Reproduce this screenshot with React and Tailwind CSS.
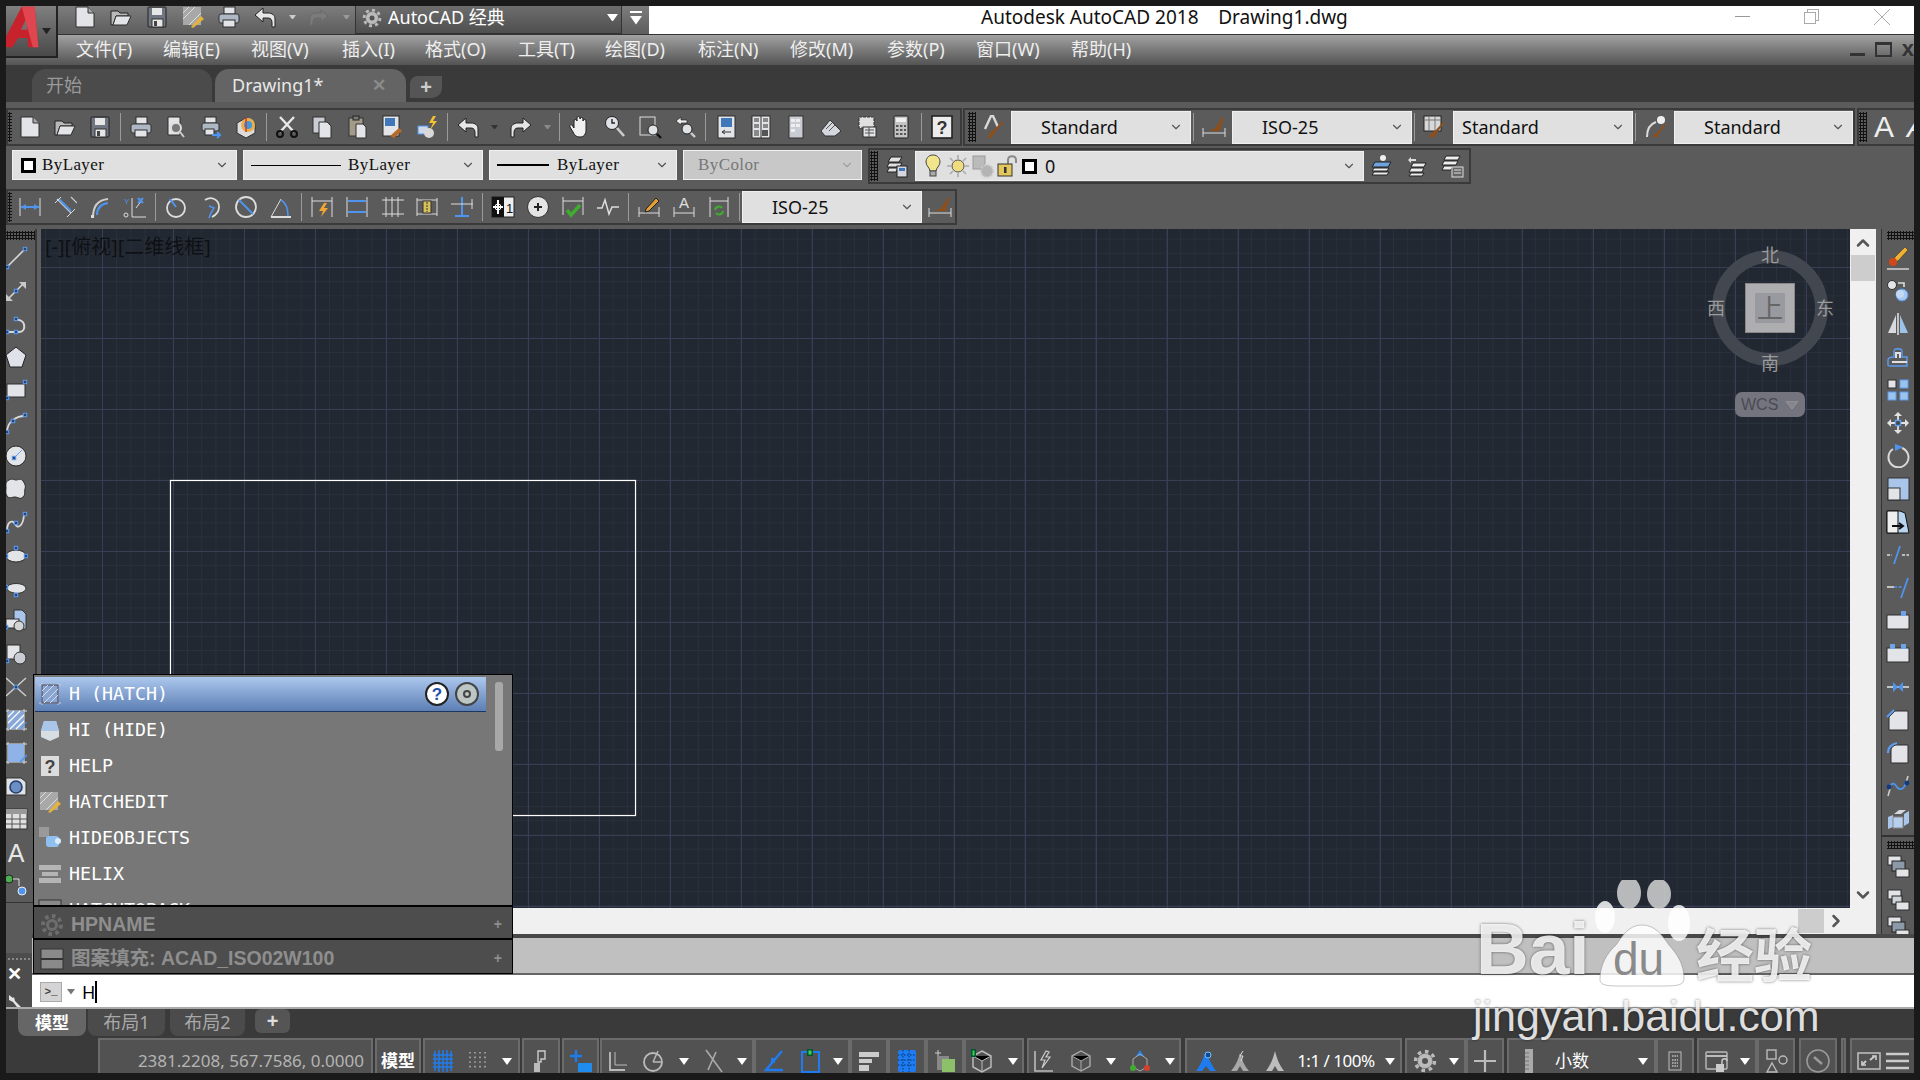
import { ChevronDown, ChevronUp, ChevronRight } from 'lucide-react';

const CJK = "font-['Noto_Sans','Noto_Sans_CJK_SC',sans-serif]";

const Hd = ({ x, y }) => <rect x={x - 1.7} y={y - 1.7} width="3.4" height="3.4" fill="#26447a" stroke="#5d9cf0" strokeWidth="1" />;
const P = { fill: '#e2e4e8', stroke: '#2e2e2e', strokeWidth: 1 };
const G = { fill: '#c9ccd2', stroke: '#333', strokeWidth: 1 };

// every icon of the picture, on a 24 x 24 grid
const icons = {
  new: <><path d="M3 2h12l6 6v14H3z" {...P} /><path d="M15 2v6h6" fill="#aaa" stroke="#333" /></>,
  open: <><path d="M2 6h7l2 2h8v3H7l-3 9H2z" fill="#b9b9b9" stroke="#222" /><path d="M7 11h15l-4 9H4z" {...P} /></>,
  save: <><rect x="3" y="2" width="18" height="20" rx="1" fill="#6f7681" stroke="#222" /><rect x="7" y="3" width="10" height="7" fill="#e6e6e6" /><rect x="7" y="14" width="11" height="8" fill="#e6e6e6" stroke="#333" /><rect x="9" y="16" width="3" height="5" fill="#444" /></>,
  print: <><rect x="7" y="2" width="11" height="7" {...P} /><rect x="2" y="9" width="20" height="9" rx="2" fill="#aeb8c4" stroke="#333" /><rect x="6" y="15" width="12" height="7" {...P} /></>,
  preview: <><path d="M4 2h12v18H4z" {...P} /><circle cx="12" cy="13" r="5" fill="#777" stroke="#ddd" strokeWidth="2" /><path d="M16 17l4 5" stroke="#ccc" strokeWidth="2" /></>,
  publish: <><rect x="6" y="2" width="11" height="6" {...P} /><rect x="3" y="8" width="17" height="8" rx="2" fill="#aeb8c4" stroke="#333" /><rect x="6" y="14" width="9" height="6" {...P} /><path d="M13 20h8m-3-3l3 3-3 3" fill="none" stroke="#4f94ee" strokeWidth="2" /></>,
  plot3d: <><path d="M3 8l9-5 9 5v10l-9 5-9-5z" fill="#dcdcdc" stroke="#333" /><circle cx="14" cy="10" r="7" fill="#e8b04a" /><circle cx="14" cy="10" r="4" fill="#3d9adf" /><path d="M12 3v14" stroke="#d33" strokeWidth="1.5" /></>,
  cut: <><path d="M5 2l14 15M19 2L5 17" stroke="#e8e8e8" strokeWidth="2.4" /><circle cx="5" cy="19" r="3" fill="none" stroke="#111" strokeWidth="2" /><circle cx="19" cy="19" r="3" fill="none" stroke="#111" strokeWidth="2" /></>,
  copy: <><rect x="3" y="2" width="12" height="16" {...G} /><path d="M9 7h8l4 4v12H9z" {...P} /></>,
  paste: <><rect x="4" y="3" width="14" height="18" fill="#a49a8a" stroke="#333" /><rect x="8" y="1" width="6" height="4" fill="#777" stroke="#222" /><path d="M11 9h7l3 3v11H11z" {...P} /></>,
  match: <><rect x="3" y="1" width="16" height="20" {...P} /><rect x="5" y="3" width="10" height="8" fill="#3f77b8" /><path d="M10 21l9-8 3 3-8 7z" fill="#b56a28" /></>,
  blockx: <><rect x="3" y="11" width="10" height="8" fill="#cfd8e6" stroke="#4f94ee" /><circle cx="14" cy="18" r="5" fill="#d8d8d8" /><path d="M18 1l-4 7h4l-3 7 7-9h-4l3-5z" fill="#f2c230" /></>,
  undo: <><path d="M10 3L2 10l8 7v-4h5c3 0 4 2 4 5v4h3v-8c0-4-3-6-7-6h-5z" fill="#e6e6e6" stroke="#222" /></>,
  redo: <><path d="M14 3l8 7-8 7v-4H9c-3 0-4 2-4 5v4H2v-8c0-4 3-6 7-6h5z" fill="#e6e6e6" stroke="#222" /></>,
  redoDim: <><path d="M14 5l7 6-7 6v-4H9c-2 0-3 2-3 4v3H3v-7c0-3 3-5 6-5h5z" fill="#7b7b7b" stroke="#6a6a6a" /></>,
  pan: <><path d="M6 13V6a1.4 1.4 0 0 1 3 0V3a1.4 1.4 0 0 1 3 0v1a1.4 1.4 0 0 1 3 0v2a1.4 1.4 0 0 1 3 0v9c0 4-2 7-6 7-3 0-5-1-7-5l-3-5c-1-2 1-3 2-2z" fill="#f0f0f0" stroke="#222" /></>,
  zoomrt: <><circle cx="9" cy="8" r="6.5" fill="#dfe3e8" stroke="#222" /><path d="M9 4v4h3" fill="none" stroke="#222" strokeWidth="1.4" /><path d="M14 13l7 8" stroke="#ccc" strokeWidth="2.6" /></>,
  zoomwin: <><rect x="2" y="2" width="15" height="18" fill="none" stroke="#ddd" /><circle cx="15" cy="15" r="5" fill="#dfe3e8" stroke="#222" /><path d="M19 19l4 4" stroke="#111" strokeWidth="2.4" /></>,
  zoomprev: <><path d="M8 2L3 6l5 4V8h6V5H8z" fill="#eee" stroke="#222" strokeWidth=".7" /><circle cx="14" cy="14" r="5" fill="#dfe3e8" stroke="#222" /><path d="M18 18l4 4" stroke="#ccc" strokeWidth="2.4" /></>,
  props: <><rect x="4" y="1" width="17" height="22" {...P} /><rect x="7" y="3" width="11" height="9" fill="#3f77b8" /><path d="M8 17h9M8 17l3-2m-3 2l3 2" stroke="#333" fill="none" /></>,
  dc: <><rect x="3" y="1" width="18" height="22" {...P} /><path d="M12 1v22" stroke="#333" /><g fill="#888"><rect x="5" y="3" width="5" height="4" /><rect x="14" y="3" width="5" height="4" /><rect x="5" y="9" width="5" height="4" /><rect x="14" y="9" width="5" height="4" /><rect x="5" y="15" width="5" height="6" /></g><rect x="13" y="15" width="6" height="6" fill="#555" /></>,
  palette: <><rect x="5" y="1" width="14" height="22" {...G} /><g fill="#eee"><rect x="7" y="4" width="4" height="3" /><rect x="12" y="4" width="4" height="3" /><rect x="7" y="9" width="4" height="3" /><rect x="12" y="9" width="4" height="3" /><rect x="7" y="14" width="4" height="3" /></g></>,
  sheet: <><path d="M2 16L11 5l11 11-6 5H6z" fill="#d4d8de" stroke="#333" /><path d="M7 14l6-6M10 16l6-6" stroke="#555" /></>,
  markup: <><path d="M5 2h15v11H5z" fill="#e0e0e0" stroke="#333" strokeDasharray="3 1" /><rect x="9" y="12" width="13" height="10" {...P} /><path d="M11 15h9M11 18h9M15 12v10" stroke="#555" /></>,
  calc: <><rect x="5" y="1" width="14" height="22" rx="1" fill="#c4c4c4" stroke="#222" /><rect x="7" y="3" width="10" height="4" fill="#efefef" /><g fill="#555"><rect x="7" y="10" width="2.5" height="2" /><rect x="11" y="10" width="2.5" height="2" /><rect x="15" y="10" width="2" height="2" /><rect x="7" y="14" width="2.5" height="2" /><rect x="11" y="14" width="2.5" height="2" /><rect x="15" y="14" width="2" height="2" /><rect x="7" y="18" width="2.5" height="2" /><rect x="11" y="18" width="2.5" height="2" /><rect x="15" y="18" width="2" height="2" /></g></>,
  help: <><rect x="2" y="1" width="20" height="22" fill="#ececec" stroke="#222" strokeWidth="1.6" /><text x="12" y="19" textAnchor="middle" fontSize="18" fontWeight="700" fill="#333" fontFamily="Liberation Sans">?</text></>,
  brushA: <><path d="M3 14L9 1h2l5 11" fill="none" stroke="#d8d8d8" strokeWidth="2.4" /><path d="M21 8l-7 8-5 7H5c3-2 2-7 7-8l8-9z" fill="#8d4f1c" /></>,
  brushDim: <><path d="M1 13v9M23 13v9M1 18h22" stroke="#ddd" /><path d="M21 2l-6 8c-2 4-4 4-8 6h11c1-3 0-5 4-12z" fill="#8d4f1c" /></>,
  brushTab: <><rect x="1" y="1" width="17" height="15" fill="#d8d8d8" stroke="#222" /><path d="M1 5h17M6 1v15M12 1v15" stroke="#777" /><path d="M22 7l-6 8-5 7H5c3-2 3-5 7-6l8-9z" fill="#8d4f1c" /></>,
  brushLead: <><path d="M3 22c0-8 3-13 9-15" fill="none" stroke="#ddd" strokeWidth="2" /><circle cx="17" cy="5" r="4" fill="#eee" /><path d="M22 9l-5 7-4 6H8c2-2 3-4 6-5l6-8z" fill="#8d4f1c" /></>,
  layers: <><path d="M6 3h11l-3 5H3z" fill="#e2e2e2" stroke="#222" /><path d="M4 9h13l-2 4H2z" fill="#e2e2e2" stroke="#222" /><path d="M4 14h9l-2 4H2z" fill="#e2e2e2" stroke="#222" /><rect x="12" y="12" width="10" height="11" fill="#d4d8de" stroke="#222" /><rect x="14" y="14" width="6" height="3" fill="#3f77b8" /></>,
  layerCur: <><circle cx="13" cy="4" r="3" fill="#eee" /><path d="M5 8h16l-3 5H2z" fill="#6fa3dd" stroke="#222" /><path d="M4 14h15l-2 3H2zM4 18h15l-2 3H2z" fill="#eee" stroke="#222" /></>,
  layerPrev: <><path d="M3 6l3-3v2h5v2H6v2z" fill="#ddd" /><path d="M8 9h13l-2 4H6zM6 14h13l-2 4H4zM6 19h13l-2 3H4z" fill="#eee" stroke="#222" /></>,
  layerSt: <><path d="M6 2h14l-2 4H4zM4 7h14l-2 4H2zM4 12h9l-2 4H2z" fill="#eee" stroke="#222" /><rect x="12" y="13" width="11" height="10" fill="#666" stroke="#ddd" /><path d="M14 16h7M14 19h7" stroke="#ddd" /></>,
  bulb: <><path d="M12 1c5 0 7 4 7 7 0 4-4 6-4 9H9c0-3-4-5-4-9 0-3 2-7 7-7z" fill="#f2e48a" stroke="#444" /><rect x="9" y="17" width="6" height="5" fill="#aaa" stroke="#444" /></>,
  sun: <><circle cx="12" cy="12" r="6" fill="#f0dc80" stroke="#555" /><path d="M12 1v4M12 19v4M1 12h4M19 12h4M4 4l3 3M17 17l3 3M20 4l-3 3M7 17l-3 3" stroke="#aaa" strokeWidth="1.6" /></>,
  vp: <><rect x="2" y="2" width="12" height="13" fill="#bbb" stroke="#999" /><circle cx="16" cy="17" r="6" fill="#b4b4b4" stroke="#c8c8c8" strokeDasharray="2 1.5" strokeWidth="2" /></>,
  lock: <><path d="M12 10V6c0-5 8-5 8 0v3" fill="none" stroke="#8a8a8a" strokeWidth="2" /><rect x="2" y="10" width="14" height="12" fill="#e3c75c" stroke="#333" /><rect x="8" y="13" width="2.5" height="6" fill="#333" /></>,
  dim1: <><path d="M2 3v18M22 3v18" stroke="#ddd" /><path d="M3 12h18" stroke="#4f94ee" strokeWidth="2" /><path d="M3 12l5-3v6zM21 12l-5-3v6z" fill="#4f94ee" /></>,
  dim2: <><path d="M4 4l14 14M18 2l6 6" stroke="#ccc" strokeWidth="1.2" /><path d="M6 4l12 12" stroke="#4f94ee" strokeWidth="2" /><path d="M2 8l6-6M14 22l8-8" stroke="#ddd" /></>,
  dim3: <><path d="M5 22c0-11 5-17 15-18" fill="none" stroke="#ccc" strokeWidth="2" /><path d="M9 20c0-7 4-11 11-12" fill="none" stroke="#4f94ee" strokeWidth="2" /><rect x="3" y="20" width="3" height="3" fill="#ddd" /></>,
  dim4: <><text x="1" y="9" fontSize="8" fill="#4f94ee" fontFamily="Liberation Sans">Y</text><path d="M9 3v19M9 22h14M13 13l6-8" stroke="#ddd" fill="none" /><path d="M15 3l5 5m0-5l-5 5" stroke="#4f94ee" strokeWidth="2" /><circle cx="3" cy="20" r="2" fill="none" stroke="#ddd" /></>,
  dimR: <><circle cx="12" cy="13" r="9" fill="none" stroke="#ddd" strokeWidth="1.8" /><path d="M6 4l6 8" stroke="#4f94ee" strokeWidth="2" /></>,
  dimJ: <><path d="M6 5c6-4 14-1 14 7 0 5-3 8-7 10" fill="none" stroke="#ddd" strokeWidth="1.8" /><path d="M10 11l5 2-3 5-2 5" fill="none" stroke="#4f94ee" strokeWidth="1.6" /></>,
  dimD: <><circle cx="12" cy="12" r="10" fill="none" stroke="#ddd" strokeWidth="1.8" /><path d="M5 5l14 14" stroke="#4f94ee" strokeWidth="2" /></>,
  dimA: <><path d="M2 22h20" stroke="#ddd" strokeWidth="2" /><path d="M2 22L12 4" stroke="#ddd" /><path d="M12 5c5 3 7 9 7 16" fill="none" stroke="#4f94ee" strokeWidth="1.6" /></>,
  dimQ: <><path d="M2 2v20M22 2v20M2 6h20" stroke="#ddd" /><path d="M14 8l-5 8h4l-2 6 7-9h-4l3-5z" fill="#f2a530" /></>,
  dimB: <><path d="M2 2v20M22 2v20" stroke="#ddd" /><path d="M3 6h18M3 17h18" stroke="#4f94ee" strokeWidth="2" /></>,
  dimC: <><path d="M2 5h22M2 19h22M6 2v20M12 2v20M18 2v20" stroke="#ddd" /></>,
  dimS: <><path d="M2 3v18M22 3v18M2 5h20M2 19h20" stroke="#ddd" /><rect x="8" y="6" width="8" height="12" fill="#d8c05a" stroke="#333" /><path d="M12 7v10" stroke="#333" strokeDasharray="2 1" /></>,
  dimT: <><path d="M12 2v20M5 21h14" stroke="#4f94ee" strokeWidth="2" /><path d="M1 9h22M22 4v10" stroke="#ddd" /></>,
  tol: <><rect x="1" y="2" width="22" height="20" fill="#eee" stroke="#222" /><rect x="1" y="2" width="12" height="20" fill="#111" /><path d="M7 5v14M2 12h10" stroke="#fff" strokeWidth="2" /><circle cx="7" cy="12" r="3" fill="none" stroke="#fff" /><text x="15" y="18" fontSize="13" fill="#111" fontFamily="Liberation Sans">1</text></>,
  cen: <><circle cx="12" cy="12" r="10.5" fill="#e4e4e4" stroke="#333" /><path d="M12 8v8M8 12h8" stroke="#222" strokeWidth="2" /></>,
  insp: <><path d="M2 2v18M22 2v18M2 6h20" stroke="#ddd" /><path d="M6 15l4 5 9-10" fill="none" stroke="#3fae2f" strokeWidth="3.4" /></>,
  jog: <><path d="M1 13h5l3-8 4 14 3-7h7" fill="none" stroke="#ddd" strokeWidth="1.5" /></>,
  dimPen: <><path d="M2 12v10M22 12v10M2 18h20" stroke="#ddd" /><path d="M9 14L19 3l3 3-10 10-4 1z" fill="#e0a032" stroke="#222" /></>,
  dimTx: <><text x="12" y="13" textAnchor="middle" fontSize="15" fill="#e0e0e0" fontFamily="Liberation Sans">A</text><path d="M2 12v10M22 12v10M2 18h20" stroke="#ddd" /></>,
  dimUp: <><path d="M3 2v20M21 2v20M3 6h18" stroke="#ddd" /><path d="M8 15a4 4 0 0 1 7-2m1 3a4 4 0 0 1-7 2" fill="none" stroke="#3fae2f" strokeWidth="2" /></>,
  line: <><path d="M4 20L20 4" stroke="#d8d8d8" strokeWidth="1.6" /><Hd x={3} y={21} /><Hd x={21} y={3} /></>,
  xline: <><path d="M5 19L19 5" stroke="#d8d8d8" strokeWidth="1.6" /><path d="M15 3h7v7zM2 15v7h7z" fill="#c9c9c9" /><Hd x={12} y={12} /></>,
  pline: <><path d="M3 20h12c7 0 7-11 0-12h-4" fill="none" stroke="#d8d8d8" strokeWidth="2" /><Hd x={3} y={20} /><Hd x={12} y={20} /><Hd x={12} y={7} /></>,
  polygon: <path d="M12 2l10 8-4 12H6L2 10z" fill="#dfe2e8" stroke="#222" />,
  rect: <><rect x="3" y="6" width="18" height="13" {...P} /><Hd x={3} y={20} /><Hd x={21} y={4} /></>,
  arc: <><path d="M3 21c0-9 8-16 18-16" fill="none" stroke="#d8d8d8" strokeWidth="1.8" /><Hd x={3} y={21} /><Hd x={9} y={10} /><Hd x={21} y={4} /></>,
  circle: <><circle cx="12" cy="12" r="10" {...P} /><path d="M11 13l7-7" stroke="#5d9cf0" /><Hd x={10} y={14} /></>,
  cloud: <path d="M5 3c3-2 5 0 7 0s5-2 7 1 3 5 2 8 1 5-2 8-5 0-8 0-6 2-8-1-1-5-1-8-1-6 3-8z" {...P} />,
  spline: <><path d="M3 21c0-9 5-12 8-7 2 5 8 3 9-9" fill="none" stroke="#d8d8d8" strokeWidth="1.8" /><Hd x={3} y={21} /><Hd x={12} y={13} /><Hd x={21} y={4} /></>,
  ellipse: <><ellipse cx="12" cy="13" rx="10" ry="6" {...P} /><Hd x={2} y={13} /><Hd x={12} y={5} /><Hd x={22} y={13} /></>,
  earc: <><path d="M3 12c0-6 18-6 19 0 0 5-9 6-12 5s-6-1-7-5z" {...P} /><Hd x={2} y={11} /><Hd x={12} y={19} /></>,
  insert: <><path d="M10 1h8l4 4v15H10z" fill="#a9c6ea" stroke="#333" /><rect x="2" y="10" width="13" height="9" {...P} /><circle cx="15" cy="17" r="5" fill="#d4d4d4" stroke="#333" /><Hd x={2} y={18} /></>,
  block: <><rect x="3" y="3" width="13" height="14" {...P} /><circle cx="16" cy="16" r="6" fill="#c9ccd2" stroke="#333" /><Hd x={3} y={19} /></>,
  xpoint: <><path d="M2 3l20 18M22 3L2 21" stroke="#cfcfcf" strokeWidth="1.4" /><Hd x={12} y={12} /></>,
  hatch: <><path d="M1 3h22M1 21h22M4 1v22M20 1v22" stroke="#ddd" /><rect x="4" y="3" width="16" height="18" fill="#88a9d8" /><path d="M4 9l6-6M4 15L16 3M6 21L20 7M12 21l8-8" stroke="#fff" strokeWidth="1.2" /><path d="M16 21l7-7" stroke="#4f94ee" /></>,
  hatch2: <><path d="M1 3h22M1 21h22M4 1v22M20 1v22" stroke="#ddd" /><rect x="4" y="3" width="16" height="18" fill="#8fb3e6" /><path d="M16 21l7-7" stroke="#4f94ee" strokeWidth="1.4" /></>,
  region: <><path d="M2 4h15l5 4v13H2z" fill="#dfe2e8" stroke="#333" /><circle cx="12" cy="13" r="6" fill="#6b8fc4" stroke="#24406d" strokeWidth="1.6" /></>,
  table: <><rect x="1" y="2" width="22" height="20" fill="#e0e0e0" stroke="#333" /><rect x="1" y="2" width="22" height="5" fill="#999" /><path d="M8 7v15M16 7v15M1 12h22M1 17h22" stroke="#555" /></>,
  textA: <text x="12" y="22" textAnchor="middle" fontSize="25" fill="#e8e8e8" fontFamily="Liberation Sans">A</text>,
  addsel: <><circle cx="5" cy="6" r="4" fill="#4caf50" stroke="#222" /><circle cx="18" cy="18" r="4" fill="#4f94ee" stroke="#eee" /><path d="M9 6h6v7" fill="none" stroke="#ddd" /></>,
  erase: <><path d="M22 4l-3-3L9 11l-2 5 5-1z" fill="#f0b030" stroke="#333" strokeWidth=".6" /><circle cx="7" cy="16" r="4" fill="#d0481a" /><path d="M1 23h22" stroke="#ccc" strokeWidth="1.6" /></>,
  rcopy: <><circle cx="6" cy="6" r="4.5" {...P} /><circle cx="16" cy="16" r="6" fill="#a9c6ea" stroke="#4f94ee" /><circle cx="14" cy="15" r="4" fill="#c3d9f2" /><path d="M12 4h6v4" fill="none" stroke="#ddd" strokeWidth="1.6" /></>,
  mirror: <><path d="M10 3v18H2z" fill="#d8dadf" /><path d="M14 3v18h8z" fill="#9cc3ea" /><path d="M12 1v22" stroke="#eee" strokeWidth="1.4" /></>,
  offset: <><path d="M2 20v-5c0-2 3-3 6-3V6c0-3 8-3 8 0v6h5v9H5c-2 0-3 0-3-1z" fill="none" stroke="#5d9cf0" strokeWidth="1.4" /><path d="M6 17h15M10 13V8h4v5" fill="none" stroke="#e0e0e0" strokeWidth="2" /></>,
  array: <><rect x="2" y="2" width="8" height="8" {...P} /><rect x="14" y="2" width="8" height="8" fill="#9cc3ea" stroke="#5d9cf0" /><rect x="2" y="14" width="8" height="8" fill="#9cc3ea" stroke="#5d9cf0" /><rect x="14" y="14" width="8" height="8" fill="#9cc3ea" stroke="#5d9cf0" /></>,
  move: <><path d="M12 1l4 4h-8zM12 23l-4-4h8zM1 12l4-4v8zM23 12l-4 4V8z" fill="#e2e2e2" /><path d="M12 4v16M4 12h16" stroke="#e2e2e2" strokeWidth="1.8" /><rect x="9.5" y="9.5" width="5" height="5" fill="#444" stroke="#5d9cf0" strokeWidth="1.4" /></>,
  rotate: <><path d="M16 4a10 10 0 1 1-9 1" fill="none" stroke="#d8d8d8" strokeWidth="2" /><path d="M9 0l8 3-8 4z" fill="#4f94ee" /></>,
  scale: <><rect x="2" y="1" width="21" height="22" fill="#a9c6ea" stroke="#333" /><rect x="2" y="11" width="12" height="12" {...P} /></>,
  stretch: <><path d="M1 1h13l5 2 4 20H1z" fill="#b9d6f0" stroke="#111" /><path d="M1 1h11v22H1z" fill="#efefef" stroke="#111" /><path d="M6 16h10m-3-3l4 3-4 3" stroke="#111" strokeWidth="2" fill="none" /></>,
  trim: <><path d="M1 12h5M16 12h7" stroke="#ddd" strokeWidth="1.6" strokeDasharray="3 1.5" /><path d="M14 3L8 21" stroke="#4f94ee" strokeWidth="1.8" /></>,
  extend: <><path d="M1 11h7" stroke="#ddd" strokeWidth="1.6" /><path d="M8 11h8" stroke="#4f94ee" strokeWidth="1.6" strokeDasharray="3 1.5" /><path d="M22 2l-7 20" stroke="#4f94ee" strokeWidth="1.8" /></>,
  brk1: <><rect x="1" y="6" width="22" height="14" {...P} /><rect x="15" y="2" width="5" height="5" fill="#6fa3e8" /></>,
  brk2: <><rect x="1" y="6" width="22" height="14" {...P} /><rect x="4" y="2" width="5" height="5" fill="#6fa3e8" /><rect x="15" y="2" width="5" height="5" fill="#6fa3e8" /></>,
  join: <><path d="M1 12h22" stroke="#ddd" strokeWidth="1.6" /><path d="M7 7l5 5-5 5zM17 7l-5 5 5 5z" fill="#4f94ee" /></>,
  chamfer: <><path d="M9 3h13v19H3V9z" {...P} /><path d="M1 9l7-7" stroke="#5d9cf0" strokeWidth="2.2" /></>,
  fillet: <><path d="M11 4h11v18H5V10c0-4 3-6 6-6z" {...P} /><path d="M2 12c0-6 4-9 9-10" fill="none" stroke="#5d9cf0" strokeWidth="2.2" /></>,
  blend: <><path d="M2 22l2-7M20 9l2-7" stroke="#ccc" strokeWidth="1.6" /><path d="M3 13c4-6 6-3 8 0s6 4 9-4" fill="none" stroke="#4f94ee" strokeWidth="1.8" /><circle cx="3" cy="13" r="2.4" fill="#123a80" /><circle cx="21" cy="9" r="2.4" fill="#123a80" /></>,
  explode: <><path d="M2 10l5-2v12l-5 2zM18 7l5-3v12l-5 3z" fill="#a9c6ea" /><path d="M7 10h10v11H7z" fill="#b6d0ee" stroke="#888" /><path d="M8 7l5-4h7l-5 4z" fill="#d4d8de" /></>,
  order1: <><rect x="2" y="1" width="13" height="9" {...P} /><rect x="6" y="6" width="13" height="10" fill="#8b99a8" stroke="#222" /><rect x="10" y="14" width="13" height="8" {...P} /></>,
  order2: <><rect x="2" y="2" width="13" height="9" {...P} /><rect x="6" y="8" width="10" height="8" fill="#cfd4da" stroke="#222" /><rect x="10" y="14" width="13" height="8" {...P} /></>,
  grid: <><path d="M4 2v20M8 1v22M12 1v22M16 1v22M20 2v20M2 6h20M2 10h20M2 14h20M2 18h20" stroke="#1f7cf0" strokeWidth="1.5" /></>,
  dots: <path d="M3 3v18M8 3v18M13 3v18M18 3v18" stroke="#aaa" strokeWidth="1.6" strokeDasharray="1.6 3" />,
  snapS: <><path d="M9 2h7v8h-4v3H9z" fill="none" stroke="#ccc" strokeWidth="1.4" /><rect x="5" y="14" width="6" height="9" fill="#bbb" /></>,
  snapB: <><path d="M7 1v12M1 7h12" stroke="#1f7cf0" strokeWidth="2.4" /><rect x="9" y="14" width="14" height="9" rx="1" fill="#1f8df0" /></>,
  ortho: <><path d="M4 3v18h15" fill="none" stroke="#bbb" strokeWidth="1.8" /><path d="M9 3v13h12" fill="none" stroke="#bbb" strokeWidth="1" /></>,
  polar: <><circle cx="11" cy="13" r="9" fill="none" stroke="#bbb" strokeWidth="1.8" /><path d="M11 13L16 2M11 13h9" stroke="#bbb" strokeWidth="1.4" /></>,
  osnapX: <><path d="M5 1l16 22M15 3l-8 18" stroke="#aaa" strokeWidth="1.6" /></>,
  isoB: <><path d="M20 2L4 21h17" fill="none" stroke="#1f7cf0" strokeWidth="2.4" /><rect x="9" y="9" width="4" height="5" fill="#1f7cf0" /></>,
  otrack: <><rect x="4" y="3" width="17" height="20" fill="none" stroke="#1f7cf0" strokeWidth="2" /><rect x="9" y="0" width="6" height="7" fill="#053" /><rect x="10.5" y="1.5" width="3" height="4" fill="#3fd24a" /></>,
  lw: <><rect x="2" y="3" width="20" height="5" fill="#ccc" /><rect x="2" y="10" width="13" height="4" fill="#ccc" /><rect x="2" y="16" width="10" height="6" fill="#ccc" /></>,
  dither: <><rect x="3" y="1" width="18" height="22" rx="2" fill="#1f7cf0" /><path d="M3 6h18M3 11h18M3 16h18M8 1v22M14 1v22" stroke="#0c4a98" strokeWidth="1.4" strokeDasharray="1.5 1.5" /></>,
  transp: <><path d="M5 1v7M2 4h6" stroke="#ccc" /><rect x="4" y="7" width="12" height="14" fill="#888" /><rect x="9" y="10" width="13" height="13" fill="#8cc16a" /></>,
  cube3d: <><path d="M12 2l9 5v11l-9 5-9-5V7z" fill="none" stroke="#bbb" strokeWidth="1.5" /><path d="M3 7l9 5 9-5M12 12v11" stroke="#bbb" /><rect x="1" y="0" width="5" height="8" fill="#053" /><rect x="2.5" y="1.5" width="2" height="5" fill="#3fd24a" /></>,
  dynUcs: <><path d="M3 2v20h18" fill="none" stroke="#bbb" strokeWidth="1.6" /><path d="M14 2l-5 9h4l-3 8 8-11h-4l3-5z" fill="none" stroke="#ccc" strokeWidth="1.2" /></>,
  cube: <><path d="M12 2l9 5v10l-9 5-9-5V7z" fill="none" stroke="#aaa" strokeWidth="1.4" /><path d="M3 7l9 5 9-5M12 12v10" stroke="#aaa" /></>,
  gizmo: <><path d="M12 1l4 6H8z" fill="#2a7fe0" /><path d="M12 5l7 5v8l-7 4-7-4v-8z" fill="none" stroke="#aaa" /><circle cx="5" cy="19" r="3" fill="#3fae2f" /><circle cx="19" cy="19" r="3" fill="#d3412f" /></>,
  annB: <><path d="M12 2c-3 7-4 12-10 20h6l4-5 4 5h6c-6-8-7-13-10-20z" fill="#1f7cf0" /><circle cx="14" cy="6" r="3" fill="#0c4a98" stroke="#7cc0ff" /></>,
  annG: <><path d="M12 4c-2 7-4 12-9 18h6l3-5 3 5h6c-5-6-7-11-9-18z" fill="#a8a8a8" /><path d="M15 2l-3 5h3l-2 5" fill="none" stroke="#ddd" /></>,
  ann: <path d="M12 2c-2 8-4 13-9 20h6l3-5 3 5h6c-5-7-7-12-9-20z" fill="#bdbdbd" />,
  gear: <><circle cx="12" cy="12" r="7" fill="#bbb" stroke="#bbb" /><circle cx="12" cy="12" r="9.5" fill="none" stroke="#bbb" strokeWidth="3.4" strokeDasharray="3.6 3.8" /><circle cx="12" cy="12" r="3" fill="#525252" /></>,
  plus: <path d="M12 1v22M1 12h22" stroke="#bcbcbc" strokeWidth="2.2" />,
  ruler: <><rect x="8" y="0" width="8" height="24" fill="#aaa" /><path d="M8 4h4M8 8h4M8 12h4M8 16h4M8 20h4" stroke="#777" /></>,
  calcS: <><rect x="6" y="3" width="12" height="18" fill="none" stroke="#bbb" /><path d="M9 7h6M9 11h6M9 14h6M9 17h6" stroke="#bbb" strokeWidth="1.6" strokeDasharray="1.6 .8" /></>,
  winLock: <><rect x="1" y="3" width="21" height="17" rx="1" fill="none" stroke="#bbb" strokeWidth="1.4" /><path d="M1 7h21" stroke="#bbb" strokeWidth="2" /><rect x="11" y="15" width="8" height="8" fill="#ccc" /><path d="M17 15v-3c0-3 5-3 5 0" fill="none" stroke="#ccc" strokeWidth="1.4" /></>,
  shapes: <><rect x="3" y="1" width="9" height="9" fill="none" stroke="#bbb" strokeWidth="1.4" /><circle cx="19" cy="11" r="4" fill="none" stroke="#bbb" strokeWidth="1.4" /><path d="M8 14l5 9H3z" fill="none" stroke="#bbb" strokeWidth="1.4" /></>,
  clean: <><circle cx="12" cy="12" r="11" fill="none" stroke="#999" strokeWidth="1.6" /><path d="M8 8l8 7" stroke="#999" strokeWidth="2.4" /></>,
  full: <><rect x="1" y="4" width="22" height="16" fill="none" stroke="#bbb" strokeWidth="1.6" /><path d="M5 16l4-4M13 11l5-4" stroke="#ccc" strokeWidth="2" /><path d="M5 12v4h4M15 7h4v4" fill="none" stroke="#ccc" strokeWidth="1.6" /></>,
  menu: <path d="M1 5h23M1 12h23M1 19h23" stroke="#ccc" strokeWidth="2.6" />,
  hatchSm: <><path d="M1 3h22M1 21h22M4 1v22M20 1v22" stroke="#ccd" /><rect x="4" y="3" width="16" height="18" fill="#8aa5cf" stroke="#445" /><path d="M4 9l6-6M4 15L16 3M6 21L20 7M12 21l8-8" stroke="#cfe0f7" /></>,
  hide: <><path d="M6 3h12l3 10v6l-9 4-9-4v-6z" fill="#d8dde2" /><path d="M6 3h12l3 10H3z" fill="#a9c6ea" /></>,
  helpSm: <><rect x="3" y="2" width="18" height="20" fill="#dcdcdc" /><text x="12" y="19" textAnchor="middle" fontSize="18" fontWeight="700" fill="#444" fontFamily="Liberation Sans">?</text></>,
  hedit: <><rect x="2" y="2" width="18" height="18" fill="#a8a8a8" /><path d="M2 8l6-6M2 14L14 2M8 20L20 8" stroke="#ddd" /><path d="M10 22l10-11 3 3-11 9z" fill="#e6b23c" /></>,
  hideobj: <><rect x="1" y="1" width="10" height="10" fill="#9a9a9a" /><rect x="8" y="10" width="13" height="11" rx="3" fill="#8fc0f0" /><circle cx="20" cy="15" r="3" fill="#dbeaf8" /></>,
  helix: <path d="M1 3h22v5H1zM4 10h16v4H4zM1 16h22v5H1z" fill="#b5b5b5" />,
  gearGray: <><circle cx="12" cy="12" r="6" fill="#6d6d6d" /><circle cx="12" cy="12" r="9" fill="none" stroke="#6d6d6d" strokeWidth="4" strokeDasharray="3.6 3.4" /><circle cx="12" cy="12" r="3" fill="#4d4d4d" /></>,
  pattern: <><rect x="1" y="2" width="22" height="20" fill="#8a8a8a" stroke="#333" /><path d="M1 12h22" stroke="#333" strokeWidth="2" /></>,
};

function Ico({ n, s = 24 }) {
  return <svg viewBox="0 0 24 24" width={s} height={s} className="shrink-0">{icons[n]}</svg>;
}

function Tri({ c = 'fill-white', s = 10 }) {
  return <svg viewBox="0 0 10 7" width={s} height={s * 0.7} className={`${c} shrink-0`}><path d="M0 0h10L5 7z" /></svg>;
}

function Btn({ n, w = 'w-[35px]' }) {
  return <div className={`${w} h-full flex items-center justify-center shrink-0`}><Ico n={n} /></div>;
}

function Sep() {
  return <div className="w-[6px] h-full flex items-center justify-center shrink-0"><div className="w-px h-[28px] bg-[#9a9a9a]" /></div>;
}

function Grip({ w = 'w-[4px]' }) {
  return <div className={`${w} h-[30px] shrink-0 bg-[radial-gradient(#111_1px,transparent_1.2px)] bg-[length:3px_3px]`} />;
}

function Bar({ className = '', children }) {
  return <div className={`flex items-center border-2 border-[#3a3a3a] shrink-0 ${className}`}>{children}</div>;
}

function Combo({ w, h = 'h-[33px]', text, left, muted, dark, x = 'pl-[29px]' }) {
  return (
    <div className={`${w} ${h} shrink-0 flex items-center ${x} pr-[7px] ${muted ? 'bg-[#c8c8c8]' : 'bg-[#e0e0e0]'} border border-[#f0f0f0] text-[#111]`}>
      {left}
      <span className={`flex-1 whitespace-nowrap ${dark ? "font-['Liberation_Serif',serif] text-[17px] tracking-[0.4px]" : "font-['Noto_Sans',sans-serif] text-[18px]"} ${muted ? 'text-[#777]' : ''}`}>{text}</span>
      <ChevronDown size={14} className={muted ? 'text-[#a0a0a0]' : 'text-[#555]'} />
    </div>
  );
}

function Swatch({ cls = 'mr-[6px]' }) {
  return <div className={`w-[15px] h-[15px] bg-white border-[3px] border-black shrink-0 ${cls}`} />;
}

function Cell({ w, className = '', children }) {
  return <div className={`${w} h-full shrink-0 flex items-center justify-evenly pt-[9px] bg-[#525252] border-t-2 border-x-2 border-[#6b6b6b] ${className}`}>{children}</div>;
}

const menus = ['文件(F)', '编辑(E)', '视图(V)', '插入(I)', '格式(O)', '工具(T)', '绘图(D)', '标注(N)', '修改(M)', '参数(P)', '窗口(W)', '帮助(H)'];
const menuW = ['w-[87px]', 'w-[88px]', 'w-[91px]', 'w-[83px]', 'w-[93px]', 'w-[87px]', 'w-[93px]', 'w-[92px]', 'w-[97px]', 'w-[89px]', 'w-[95px]', 'w-[80px]'];
const leftTools = ['line', 'xline', 'pline', 'polygon', 'rect', 'arc', 'circle', 'cloud', 'spline', 'ellipse', 'earc', 'insert', 'block', 'xpoint', 'hatch', 'hatch2', 'region', 'table', 'textA', 'addsel'];
const rightTools = ['erase', 'rcopy', 'mirror', 'offset', 'array', 'move', 'rotate', 'scale', 'stretch', 'trim', 'extend', 'brk1', 'brk2', 'join', 'chamfer', 'fillet', 'blend', 'explode'];
const suggestions = [
  ['hide', 'HI (HIDE)'],
  ['helpSm', 'HELP'],
  ['hedit', 'HATCHEDIT'],
  ['hideobj', 'HIDEOBJECTS'],
  ['helix', 'HELIX'],
  ['pattern', 'HATCHTOBACK'],
];

function Logo() {
  return (
    <div className="absolute left-[6px] top-[6px] w-[52px] h-[52px] bg-gradient-to-b from-[#808080] to-[#4a4a4a] border-r-2 border-b-2 border-[#222] z-10 flex items-start">
      <svg viewBox="0 0 40 44" width="37" height="42" className="shrink-0">
        <path d="M-6 44L17 0h14l4 44H24l-1-10H13L7 44z" fill="#c8222c" />
        <path d="M16 25h7l-1-12z" fill="#7d6a6a" />
        <path d="M17 0h14l4 44h-6z" fill="#e04650" />
      </svg>
      <div className="mt-[22px] -ml-[1px]"><Tri c="fill-[#222]" s={9} /></div>
    </div>
  );
}

function TitleRow() {
  return (
    <div className="h-[28px] flex shrink-0 pl-[61px] bg-gradient-to-b from-[#7d7d7d] to-[#5d5d5d]">
      <div className="flex pb-[6px]">
        <Btn n="new" w="w-[36px]" />
        <Btn n="open" w="w-[36px]" />
        <Btn n="save" w="w-[36px]" />
        <Btn n="hedit" w="w-[36px]" />
        <Btn n="print" w="w-[36px]" />
        <Btn n="undo" w="w-[36px]" />
        <div className="w-[18px] flex items-center justify-center"><Tri c="fill-[#ccc]" s={7} /></div>
        <Btn n="redoDim" w="w-[36px]" />
        <div className="w-[18px] flex items-center justify-center"><Tri c="fill-[#999]" s={7} /></div>
      </div>
      <div className="w-[267px] flex items-center border-x border-b border-[#333] bg-gradient-to-b from-[#6d6d6d] to-[#4f4f4f] pl-[6px] pr-[3px] pb-[4px]">
        <Ico n="gear" s={20} />
        <span className={`ml-[6px] flex-1 text-[18px] text-white whitespace-nowrap ${CJK}`}>AutoCAD 经典</span>
        <Tri s={11} />
      </div>
      <div className="w-[27px] flex flex-col items-center justify-center gap-[3px] pb-[4px]">
        <div className="w-[12px] h-[2px] bg-white" />
        <Tri s={12} />
      </div>
      <div className="flex-1 bg-white relative flex items-center">
        <span className="ml-[332px] mb-[6px] text-[19px] text-[#111] font-['Noto_Sans',sans-serif] whitespace-pre">Autodesk AutoCAD 2018    Drawing1.dwg</span>
        <div className="absolute left-[1086px] top-[10px] w-[15px] h-px bg-[#999]" />
        <div className="absolute left-[1155px] top-[3px] w-[15px] h-[15px]">
          <div className="absolute right-0 top-0 w-[12px] h-[12px] border border-[#aaa]" />
          <div className="absolute left-0 bottom-0 w-[12px] h-[12px] border border-[#aaa] bg-white" />
        </div>
        <svg viewBox="0 0 16 16" width="16" height="16" className="absolute left-[1225px] top-[3px]"><path d="M0 0l16 16M16 0L0 16" stroke="#aaa" /></svg>
      </div>
    </div>
  );
}

function MenuRow() {
  return (
    <div className="h-[31px] shrink-0 flex items-center bg-gradient-to-b from-[#a2a2a2] to-[#545454] border-t border-[#333] pl-[70px] pb-[2px]">
      {menus.map((m, i) => (
        <span key={m} className={`${menuW[i]} shrink-0 text-[18px] text-[#eee] whitespace-nowrap ${CJK}`}>{m}</span>
      ))}
      <div className="ml-auto flex items-center gap-[10px]">
        <div className="w-[15px] h-[3px] bg-[#333] mt-[10px]" />
        <div className="w-[17px] h-[15px] border-2 border-[#333] border-t-[3px]" />
        <span className="text-[#333] text-[22px] leading-none font-bold font-['Liberation_Sans',sans-serif]">x</span>
      </div>
    </div>
  );
}

function TabRow() {
  return (
    <div className="h-[37px] shrink-0 bg-[#3a3a3a] flex items-end pl-[26px]">
      <div className={`w-[180px] h-[33px] bg-[#4b4b4b] rounded-t-[14px] flex items-center pl-[14px] text-[18px] text-[#9a9a9a] ${CJK}`}>开始</div>
      <div className="ml-[3px] w-[191px] h-[33px] bg-[#646464] rounded-t-[14px] flex items-center pl-[17px] pr-[20px] text-[18px] text-[#e8e8e8] font-['Noto_Sans',sans-serif]">
        <span className="flex-1">Drawing1*</span>
        <span className="text-[#8a8a8a] text-[17px] font-bold font-['Liberation_Sans',sans-serif]">✕</span>
      </div>
      <div className="ml-[4px] mb-[4px] w-[32px] h-[22px] bg-[#555] rounded-tl-[8px] rounded-br-[10px] flex items-center justify-center text-[#ccc] text-[20px] font-bold font-['Liberation_Sans',sans-serif]">+</div>
    </div>
  );
}

function ToolbarOne() {
  return (
    <div className="flex h-[38px] shrink-0">
      <Bar className="w-[956px]">
        <Grip />
        {['new', 'open', 'save'].map((n) => <Btn key={n} n={n} />)}
        <Sep />
        {['print', 'preview', 'publish', 'plot3d'].map((n) => <Btn key={n} n={n} />)}
        <Sep />
        {['cut', 'copy', 'paste', 'match', 'blockx'].map((n) => <Btn key={n} n={n} />)}
        <Sep />
        <Btn n="undo" />
        <div className="w-[18px] flex justify-center"><Tri c="fill-[#333]" s={7} /></div>
        <Btn n="redo" />
        <div className="w-[18px] flex justify-center"><Tri c="fill-[#8a8a8a]" s={7} /></div>
        <Sep />
        {['pan', 'zoomrt', 'zoomwin', 'zoomprev'].map((n) => <Btn key={n} n={n} />)}
        <Sep />
        {['props', 'dc', 'palette', 'sheet', 'markup', 'calc'].map((n) => <Btn key={n} n={n} />)}
        <Sep />
        <Btn n="help" />
      </Bar>
      <Bar className="ml-px w-[892px]">
        <div className="w-[3px]" />
        <Grip w="w-[8px]" />
        <Btn n="brushA" w="w-[35px]" />
        <Combo w="w-[180px]" text="Standard" />
        <div className="w-[5px] h-full flex items-center justify-center"><div className="w-px h-[28px] bg-[#9a9a9a]" /></div>
        <Btn n="brushDim" w="w-[36px]" />
        <Combo w="w-[180px]" text="ISO-25" />
        <div className="w-[5px] h-full flex items-center justify-center"><div className="w-px h-[28px] bg-[#9a9a9a]" /></div>
        <Btn n="brushTab" w="w-[36px]" />
        <Combo w="w-[180px]" text="Standard" x="pl-[8px]" />
        <div className="w-[5px] h-full flex items-center justify-center"><div className="w-px h-[28px] bg-[#9a9a9a]" /></div>
        <Btn n="brushLead" w="w-[36px]" />
        <Combo w="w-[179px]" text="Standard" />
      </Bar>
      <Bar className="ml-[2px] flex-1 border-r-0 overflow-hidden">
        <div className="w-[2px]" />
        <Grip w="w-[8px]" />
        <span className="ml-[7px] text-[30px] leading-none text-[#eee] font-['Liberation_Sans',sans-serif]">A</span>
        <span className="ml-[13px] text-[30px] leading-none text-[#eee] italic font-['Liberation_Sans',sans-serif]">A</span>
      </Bar>
    </div>
  );
}

function ToolbarTwo() {
  const line = (cls) => <div className={`${cls} bg-black shrink-0`} />;
  return (
    <div className="flex h-[36px] shrink-0 mt-[2px] items-start pl-[6px]">
      <div className="flex gap-[6px] mt-[2px]">
        <Combo w="w-[225px]" h="h-[30px]" dark text="ByLayer" x="pl-[8px]" left={<Swatch />} />
        <Combo w="w-[240px]" h="h-[30px]" dark text="ByLayer" x="pl-[7px]" left={<>{line('w-[90px] h-px')}<div className="w-[7px]" /></>} />
        <Combo w="w-[188px]" h="h-[30px]" dark text="ByLayer" x="pl-[7px]" left={<>{line('w-[52px] h-[2px]')}<div className="w-[8px]" /></>} />
        <Combo w="w-[179px]" h="h-[30px]" dark muted text="ByColor" x="pl-[14px]" />
      </div>
      <Bar className="ml-[6px] w-[603px] h-[36px]">
        <div className="w-[3px]" />
        <Grip w="w-[8px]" />
        <Btn n="layers" w="w-[37px]" />
        <div className="w-[449px] h-[30px] shrink-0 flex items-center bg-[#e0e0e0] border border-[#f0f0f0] pr-[7px] pl-[4px]">
          <Btn n="bulb" w="w-[25px]" />
          <Btn n="sun" w="w-[25px]" />
          <Btn n="vp" w="w-[25px]" />
          <Btn n="lock" w="w-[25px]" />
          <Swatch cls="ml-[2px]" />
          <span className="ml-[8px] flex-1 text-[18px] text-[#111] font-['Noto_Sans',sans-serif]">0</span>
          <ChevronDown size={14} className="text-[#555]" />
        </div>
        <Btn n="layerCur" w="w-[35px]" />
        <Btn n="layerPrev" w="w-[35px]" />
        <Btn n="layerSt" w="w-[35px]" />
      </Bar>
    </div>
  );
}

function ToolbarThree() {
  return (
    <div className="flex h-[36px] shrink-0 mt-[5px]">
      <Bar className="w-[951px]">
        <Grip />
        {['dim1', 'dim2', 'dim3', 'dim4'].map((n) => <Btn key={n} n={n} />)}
        <Sep />
        {['dimR', 'dimJ', 'dimD', 'dimA'].map((n) => <Btn key={n} n={n} />)}
        <Sep />
        {['dimQ', 'dimB', 'dimC', 'dimS', 'dimT'].map((n) => <Btn key={n} n={n} />)}
        <Sep />
        {['tol', 'cen', 'insp', 'jog'].map((n) => <Btn key={n} n={n} />)}
        <Sep />
        {['dimPen', 'dimTx', 'dimUp'].map((n) => <Btn key={n} n={n} />)}
        <Sep />
        <Combo w="w-[180px]" h="h-[32px]" text="ISO-25" />
        <Btn n="brushDim" />
      </Bar>
    </div>
  );
}

function Compass() {
  const label = `absolute text-[18px] leading-none text-[#9b9b9b] ${CJK}`;
  return (
    <div className="absolute left-[1653px] top-[21px] w-[152px] h-[174px]">
      <div className="absolute left-[18px] top-0 w-[116px] h-[116px] rounded-full border-[13px] border-[#43474f]" />
      <div className="absolute left-[51px] top-[33px] w-[50px] h-[50px] bg-[#aeaeb0] border border-[#888] flex items-center justify-center">
        <div className={`w-[30px] h-[30px] bg-[#989aa0] flex items-center justify-center text-[26px] leading-none text-[#666] ${CJK}`}>上</div>
      </div>
      <span className={`${label} left-[67px] top-[-4px]`}>北</span>
      <span className={`${label} left-[67px] top-[104px]`}>南</span>
      <span className={`${label} left-[13px] top-[49px]`}>西</span>
      <span className={`${label} left-[122px] top-[49px]`}>东</span>
      <div className="absolute left-[41px] top-[142px] w-[70px] h-[25px] rounded-[7px] bg-[#74747e] flex items-center pl-[6px] gap-[8px] text-[16px] text-[#494b52] font-['Liberation_Sans',sans-serif]">
        WCS
        <svg viewBox="0 0 12 8" width="12" height="8"><path d="M0 0h12L6 8z" fill="#85858f" stroke="#999" /></svg>
      </div>
    </div>
  );
}

function Canvas() {
  return (
    <div className="relative flex-1 bg-[#222831] [background-image:linear-gradient(to_right,#383e55_1px,transparent_1px),linear-gradient(to_bottom,#383e55_1px,transparent_1px),linear-gradient(to_right,#2a303c_1px,transparent_1px),linear-gradient(to_bottom,#2a303c_1px,transparent_1px)] [background-size:71px_71px,71px_71px,14.2px_14.2px,14.2px_14.2px] [background-position:61px_0,0_38px,4.2px_0,0_9.6px]">
      <span className={`absolute left-[4px] top-[5px] text-[20px] leading-[26px] text-[#0f1014] whitespace-nowrap ${CJK}`}>[-][俯视][二维线框]</span>
      <div className="absolute left-[129px] top-[251px] w-[466px] h-[336px] border border-white shadow-[0_0_1px_rgba(255,255,255,0.8),inset_0_0_1px_rgba(255,255,255,0.8)]" />
      <Compass />
    </div>
  );
}

function Popup() {
  return (
    <div className="absolute left-[33px] top-[674px] w-[480px] h-[300px] bg-black z-20 flex flex-col">
      <div className="relative mx-[1px] mt-[1px] h-[230px] shrink-0 bg-[#777] overflow-hidden pt-[2px] pl-[1px]">
        <div className="h-[35px] w-[451px] flex items-center pl-[3px] bg-gradient-to-b from-[#adc8ee] to-[#5d7fb4] border-b border-[#1d3660]">
          <Ico n="hatchSm" />
          <span className="ml-[7px] flex-1 text-[18.3px] text-white font-['DejaVu_Sans_Mono',monospace]">H (HATCH)</span>
          <div className="w-[24px] h-[24px] rounded-full bg-white border-2 border-[#222] flex items-center justify-center text-[17px] leading-none font-bold text-[#1d4fa8] font-['Liberation_Sans',sans-serif]">?</div>
          <div className="ml-[6px] mr-[7px] w-[24px] h-[24px] rounded-full bg-[#bcc6c4] border-2 border-[#444] flex items-center justify-center">
            <div className="w-[8px] h-[8px] rounded-full border-2 border-[#444]" />
          </div>
        </div>
        {suggestions.map(([ic, label]) => (
          <div key={label} className="h-[36px] flex items-center pl-[3px]">
            <Ico n={ic} />
            <span className="ml-[7px] text-[18.3px] text-white font-['DejaVu_Sans_Mono',monospace]">{label}</span>
          </div>
        ))}
        <div className="absolute left-[461px] top-[7px] w-[8px] h-[69px] rounded-[3px] bg-[#a8a8a8]" />
      </div>
      <div className="mx-[1px] mt-[2px] h-[31px] shrink-0 bg-[#4d4d4d] flex items-center pl-[6px] pr-[10px] pt-[4px] text-[#8e8e8e]">
        <Ico n="gearGray" />
        <span className="ml-[7px] flex-1 text-[19.5px] font-bold font-['Liberation_Sans',sans-serif]">HPNAME</span>
        <span className="text-[14px] font-bold font-['Liberation_Sans',sans-serif]">+</span>
      </div>
      <div className="mx-[1px] mt-[2px] h-[33px] shrink-0 bg-[#4d4d4d] flex items-center pl-[6px] pr-[10px] pt-[4px] text-[#8e8e8e]">
        <Ico n="pattern" />
        <span className="ml-[7px] flex-1 text-[19.5px] font-bold whitespace-nowrap font-['Liberation_Sans','Noto_Sans_CJK_SC',sans-serif]">图案填充: ACAD_ISO02W100</span>
        <span className="text-[14px] font-bold font-['Liberation_Sans',sans-serif]">+</span>
      </div>
    </div>
  );
}

function Watermark() {
  const shadow = '[text-shadow:0_0_3px_rgba(0,0,0,0.55)]';
  return (
    <div className="absolute left-[1470px] top-[880px] w-[350px] h-[160px] z-30 text-white/85">
      <span className={`absolute left-[6px] top-[32px] text-[73px] leading-none font-bold font-['Liberation_Sans',sans-serif] ${shadow}`}>Bai</span>
      <svg viewBox="0 0 350 160" width="350" height="160" className="absolute left-0 top-0">
        <ellipse cx="159" cy="13" rx="12" ry="16" fill="#d9d9d9" opacity=".82" />
        <ellipse cx="189" cy="14" rx="12" ry="15" fill="#d9d9d9" opacity=".82" />
        <ellipse cx="135" cy="37" rx="10" ry="16" fill="#fff" opacity=".82" />
        <ellipse cx="209" cy="43" rx="11" ry="18" fill="#fff" opacity=".82" />
        <path d="M172 45c-13 0-19 10-26 20-9 8-16 20-16 34 0 8 8 7 42 7s42 1 42-8c0-14-7-24-15-33-7-10-14-20-27-20z" fill="#fff" opacity=".82" stroke="#777" strokeOpacity=".5" />
      </svg>
      <span className="absolute left-[143px] top-[56px] text-[46px] leading-none text-[#8a8a8a] font-['Liberation_Sans',sans-serif]">du</span>
      <span className={`absolute left-[226px] top-[43px] text-[58px] leading-none font-bold whitespace-nowrap font-['Noto_Sans_CJK_SC',sans-serif] ${shadow}`}>经验</span>
      <span className={`absolute left-[3px] top-[115px] text-[43px] leading-none whitespace-nowrap font-['Liberation_Sans',sans-serif] ${shadow}`}>jingyan.baidu.com</span>
    </div>
  );
}

function StatusBar() {
  const arrow = <Tri s={10} />;
  return (
    <div className="h-[35px] shrink-0 flex bg-[#3a3a3a] pl-[92px] overflow-hidden">
      <Cell w="w-[275px]" className="!justify-end pr-[7px]">
        <span className="text-[17px] text-[#b4b4b4] whitespace-nowrap font-['Noto_Sans',sans-serif]">2381.2208, 567.7586, 0.0000</span>
      </Cell>
      <Cell w="w-[46px]" className="ml-[2px]"><span className={`text-[17px] font-bold text-white ${CJK}`}>模型</span></Cell>
      <Cell w="w-[97px]" className="ml-[2px] !justify-between px-[6px]"><Ico n="grid" /><Ico n="dots" />{arrow}</Cell>
      <Cell w="w-[38px]" className="ml-[2px]"><Ico n="snapS" /></Cell>
      <Cell w="w-[37px]" className="ml-[2px]"><Ico n="snapB" /></Cell>
      <Cell w="w-[154px]" className="ml-px !justify-between pl-[4px] pr-[5px]"><Ico n="ortho" /><Ico n="polar" />{arrow}<Ico n="osnapX" />{arrow}</Cell>
      <Cell w="w-[96px]" className="!justify-between pl-[6px] pr-[5px]"><Ico n="isoB" /><Ico n="otrack" />{arrow}</Cell>
      <Cell w="w-[38px]"><Ico n="lw" /></Cell>
      <Cell w="w-[38px]"><Ico n="dither" /></Cell>
      <Cell w="w-[38px]"><Ico n="transp" /></Cell>
      <Cell w="w-[60px]" className="!justify-between px-[4px]"><Ico n="cube3d" />{arrow}</Cell>
      <Cell w="w-[154px]" className="ml-[3px] !justify-between pl-[3px] pr-[4px]"><Ico n="dynUcs" /><Ico n="cube" />{arrow}<Ico n="gizmo" />{arrow}</Cell>
      <Cell w="w-[217px]" className="ml-[4px] !justify-between pl-[7px] pr-[5px]">
        <Ico n="annB" /><Ico n="annG" /><Ico n="ann" />
        <span className="text-[17px] text-white whitespace-nowrap tracking-[-0.5px] font-['Noto_Sans',sans-serif]">1:1 / 100%</span>
        {arrow}
      </Cell>
      <Cell w="w-[61px]" className="ml-[3px] !justify-between pl-[6px] pr-[5px]"><Ico n="gear" />{arrow}</Cell>
      <Cell w="w-[38px]"><Ico n="plus" /></Cell>
      <Cell w="w-[149px]" className="ml-[3px] !justify-start pl-[8px]">
        <Ico n="ruler" />
        <span className={`ml-[14px] flex-1 text-[17px] text-white ${CJK}`}>小数</span>
        <span className="mr-[6px]">{arrow}</span>
      </Cell>
      <Cell w="w-[38px]"><Ico n="calcS" /></Cell>
      <Cell w="w-[60px]" className="ml-[3px] !justify-between pl-[6px] pr-[5px]"><Ico n="winLock" />{arrow}</Cell>
      <Cell w="w-[38px]"><Ico n="shapes" /></Cell>
      <Cell w="w-[38px]" className="ml-[4px]"><Ico n="clean" /></Cell>
      <Cell w="w-[5px]" className="ml-[4px]" />
      <Cell w="flex-1" className="ml-[4px] border-r-0"><Ico n="full" /><Ico n="menu" /></Cell>
    </div>
  );
}

export default function App() {
  return (
    <div className="relative w-[1920px] h-[1080px] overflow-hidden bg-[#1a1a1a] p-[6px] flex flex-col">
      <Logo />
      <TitleRow />
      <MenuRow />
      <TabRow />

      {/* toolbars */}
      <div className="h-[127px] shrink-0 bg-[#5b5b5b] pt-[6px] flex flex-col">
        <ToolbarOne />
        <ToolbarTwo />
        <ToolbarThree />
      </div>

      {/* drawing area */}
      <div className="h-[705px] shrink-0 flex bg-[#5b5b5b]">
        <div className="w-[29px] shrink-0 flex flex-col bg-[#5b5b5b] overflow-hidden">
          <div className="h-[12px] shrink-0 flex items-center"><div className="w-full h-[9px] bg-[radial-gradient(#111_1px,transparent_1.2px)] bg-[length:3px_3px]" /></div>
          <div className="border-b border-[#333] pb-[1px]">
            {leftTools.map((n) => (
              <div key={n} className="h-[33px] w-[20px] flex items-center justify-center"><Ico n={n} /></div>
            ))}
          </div>
        </div>
        <div className="w-[2px] shrink-0 bg-[#3a3a3a]" />
        <div className="w-[4px] shrink-0 bg-[#606060]" />
        <div className="flex-1 flex flex-col min-w-0">
          <div className="h-[679px] shrink-0 flex">
            <Canvas />
            <div className="w-[26px] shrink-0 bg-[#f0f0f0] flex flex-col items-center">
              <ChevronUp size={20} strokeWidth={3} className="text-[#555] mt-[4px] shrink-0" />
              <div className="w-[24px] h-[26px] mt-[2px] bg-[#cdcdcd]" />
              <div className="flex-1" />
              <ChevronDown size={20} strokeWidth={3} className="text-[#555] mb-[3px] shrink-0" />
            </div>
          </div>
          <div className="h-[26px] shrink-0 bg-[#f0f0f0] flex items-center justify-end">
            <div className="w-[26px] h-[24px] bg-[#cdcdcd]" />
            <ChevronRight size={20} strokeWidth={3} className="text-[#555] ml-[2px] mr-[30px]" />
          </div>
        </div>
        <div className="w-[5px] shrink-0 bg-[#606060]" />
        <div className="w-px shrink-0 bg-[#333]" />
        <div className="w-[32px] shrink-0 flex flex-col">
          <div className="h-[12px] shrink-0 flex items-center pl-[5px]"><div className="w-full h-[9px] bg-[radial-gradient(#111_1px,transparent_1.2px)] bg-[length:3px_3px]" /></div>
          {rightTools.map((n) => (
            <div key={n} className="h-[33px] shrink-0 flex items-center justify-center"><Ico n={n} /></div>
          ))}
          <div className="h-[2px] shrink-0 bg-[#333]" />
          <div className="h-[10px] shrink-0 mt-[3px] pl-[5px] flex items-center"><div className="w-full h-[8px] bg-[radial-gradient(#111_1px,transparent_1.2px)] bg-[length:3px_3px]" /></div>
          <div className="h-[33px] shrink-0 flex items-center justify-center"><Ico n="order1" /></div>
          <div className="h-[33px] shrink-0 flex items-center justify-center"><Ico n="order2" /></div>
          <div className="h-[18px] overflow-hidden flex justify-center"><Ico n="order1" /></div>
        </div>
      </div>

      {/* command window */}
      <div className="h-[73px] shrink-0 flex bg-[#5b5b5b]">
        <div className="w-[26px] shrink-0 flex flex-col items-start">
          <div className="h-[24px] w-full" />
          <div className="w-full flex-1 bg-[#4d4d4d] flex flex-col items-start pl-[2px]">
            <div className="mt-[5px] w-[22px] h-[1px] border-t-2 border-dotted border-[#888]" />
            <span className="mt-[5px] ml-[-1px] text-[18px] leading-none font-bold text-white font-['Liberation_Sans',sans-serif]">✕</span>
            <svg viewBox="0 0 14 14" width="14" height="14" className="mt-[10px]"><path d="M1 2l4 3 1-1 1 4 6 6H9L5 9 1 7z" fill="#e6e6e6" /></svg>
          </div>
        </div>
        <div className="flex-1 flex flex-col min-w-0">
          <div className="h-[4px] shrink-0 bg-[#484848]" />
          <div className="h-[35px] shrink-0 bg-[#c0c0c0]" />
          <div className="h-[2px] shrink-0 bg-[#666]" />
          <div className="h-[32px] shrink-0 bg-white flex items-center pl-[8px] pt-[2px]">
            <div className="w-[22px] h-[20px] bg-[#d4d4d4] border border-[#aaa] flex items-center justify-center text-[11px] font-bold text-[#444] font-['Liberation_Mono',monospace]">&gt;_</div>
            <div className="ml-[5px]"><Tri c="fill-[#777]" s={8} /></div>
            <span className="ml-[7px] text-[18px] leading-none text-black font-['Noto_Sans',sans-serif]">H</span>
            <div className="w-[2px] h-[22px] bg-black" />
          </div>
        </div>
      </div>
      <div className="h-[2px] shrink-0 bg-[#aaa]" />

      {/* layout tabs */}
      <div className="h-[29px] shrink-0 bg-[#3a3a3a] flex items-start pl-[12px]">
        <div className={`w-[68px] h-[27px] bg-[#666] rounded-b-[8px] flex items-center justify-center text-[17px] font-bold text-white ${CJK}`}>模型</div>
        <div className={`ml-[2px] w-[77px] h-[27px] bg-[#4b4b4b] rounded-b-[8px] flex items-center justify-center text-[18px] text-[#a8a8a8] ${CJK}`}>布局1</div>
        <div className={`ml-[5px] w-[75px] h-[27px] bg-[#4b4b4b] rounded-b-[8px] flex items-center justify-center text-[18px] text-[#a8a8a8] ${CJK}`}>布局2</div>
        <div className="ml-[10px] w-[35px] h-[24px] bg-[#555] rounded-[6px] flex items-center justify-center text-[20px] font-bold text-[#ddd] font-['Liberation_Sans',sans-serif]">+</div>
      </div>

      <StatusBar />
      <Popup />
      <Watermark />
    </div>
  );
}
